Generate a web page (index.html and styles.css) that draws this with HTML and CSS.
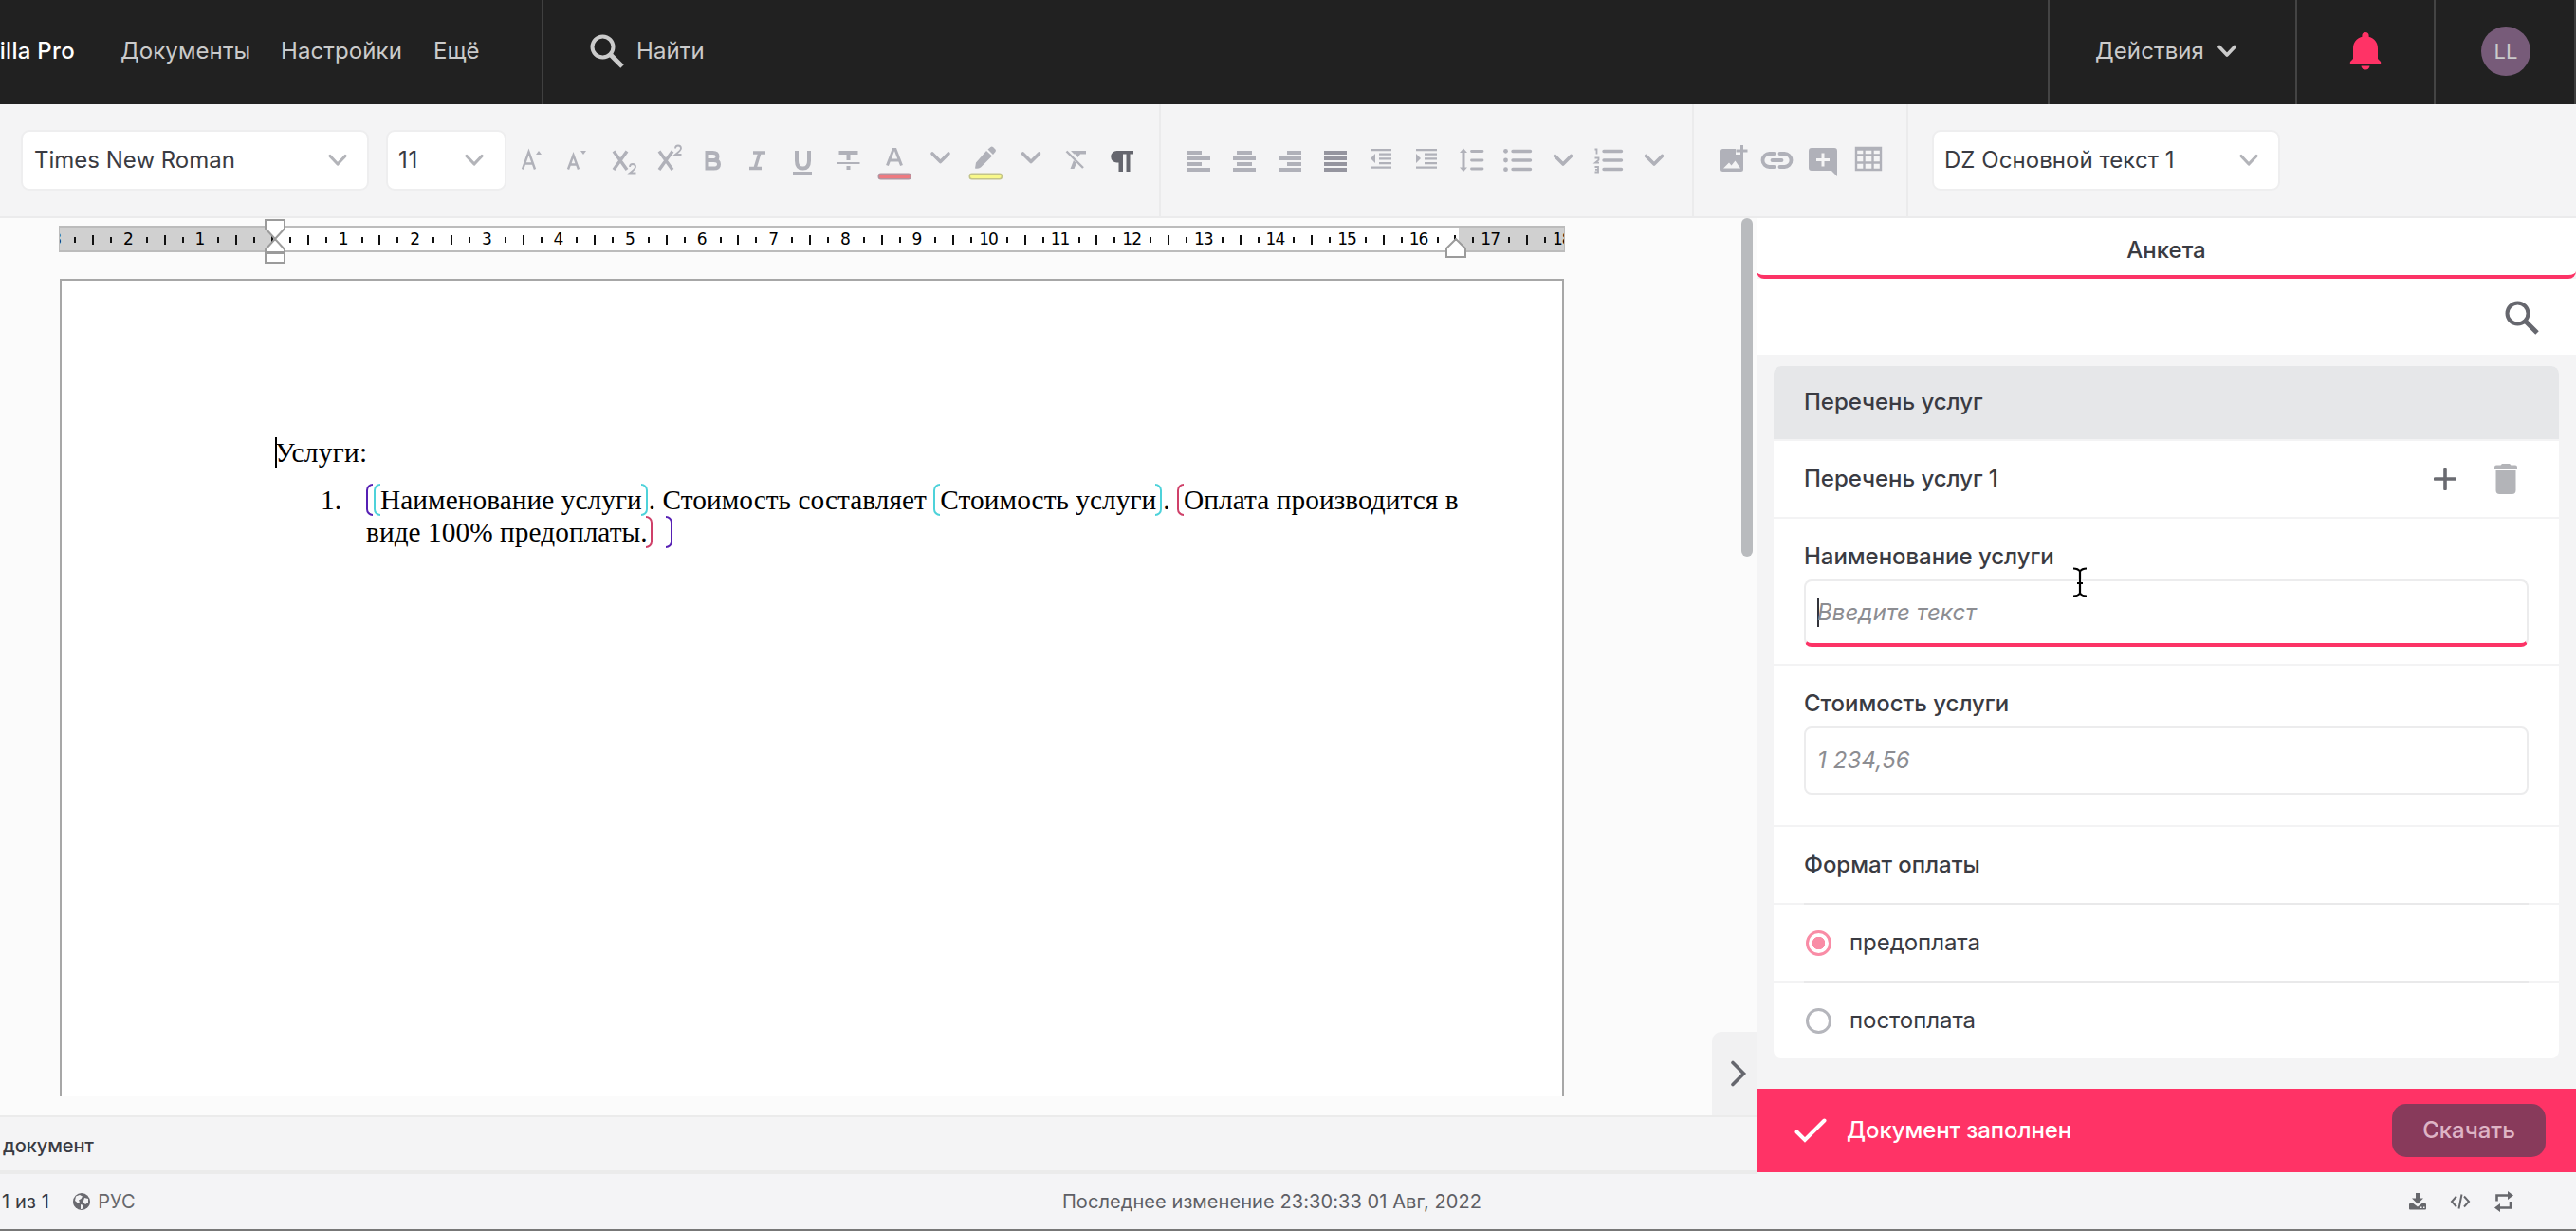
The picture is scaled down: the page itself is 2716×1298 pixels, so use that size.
FILE: index.html
```html
<!DOCTYPE html>
<html lang="ru">
<head>
<meta charset="utf-8">
<title>Doczilla Pro</title>
<link rel="stylesheet" href="styles.css">
</head>
<body>
<header class="topbar">
  <nav class="topbar-nav">
    <span class="brand">Doczilla Pro</span>
    <span class="nav-docs">Документы</span>
    <span class="nav-settings">Настройки</span>
    <span>Ещё</span>
  </nav>
  <div class="topbar-search">
    <svg width="36" height="36" viewBox="0 0 36 36" fill="none" stroke="currentColor"><circle cx="13.5" cy="13.5" r="11" stroke-width="4"/><path d="M21.5 21.5 34 34" stroke-width="5"/></svg>
    <span>Найти</span>
  </div>
  <div class="topbar-cell actions">
    <span>Действия</span>
    <svg width="22" height="14" viewBox="0 0 22 14" fill="none" stroke="currentColor" stroke-width="3.6" stroke-linecap="round" stroke-linejoin="round"><path d="M3 2.5 11 11 19 2.5"/></svg>
  </div>
  <div class="topbar-cell bell">
    <svg width="34" height="40" viewBox="0 0 34 40" fill="#ff3366"><path d="M17 0a3.6 3.6 0 0 1 3.6 3.6v1.2C26.500 6.500 30 11 30 17v11l3 3q1 3-2 3H3q-3 0-2-3l3-3V17C4 11 7.500 6.500 13.400 4.800V3.600A3.600 3.600 0 0 1 17 0z"/><path d="M12.500 35.500h9a4.500 4 0 0 1-9 0z"/></svg>
  </div>
  <div class="topbar-cell user"><span class="avatar">LL</span></div>
</header>

<div class="toolbar">
  <div class="tools tools-font">
    <div class="select font-family"><span>Times New Roman</span><svg class="chev" viewBox="0 0 22 14"><path d="M3 2.500 11 11 19 2.500"/></svg></div>
    <div class="select font-size"><span>11</span><svg class="chev" viewBox="0 0 22 14"><path d="M3 2.500 11 11 19 2.500"/></svg></div>
    <svg class="tool" viewBox="0 0 48 48"><path class="thin" d="M15 33.500 21.500 15 28 33.500M17.500 27.500h8"/><path d="M29 18h6l-3-4z"/></svg>
    <svg class="tool" viewBox="0 0 48 48"><path class="thin" d="M15 33.500 20.500 18.500 26 33.500M17 28.500h7"/><path d="M28 14h6l-3 4z"/></svg>
    <svg class="tool" viewBox="0 0 48 48"><path class="bold" d="M15 14.500 29 34M29 14.500 15 34"/><path class="fine" d="M32 31q0-3 3-3t3 3q0 2-6 6.500h6.500"/></svg>
    <svg class="tool" viewBox="0 0 48 48"><path class="bold" d="M15 14.500 29 34M29 14.500 15 34"/><path class="fine" d="M32 11.500q0-3 3-3t3 3q0 2-6 6.500h6.500"/></svg>
    <svg class="tool" viewBox="0 0 48 48"><path class="heavy" d="M17.500 16h6q5 0 5 4t-5 4h-6zM17.500 24h7q5.500 0 5.500 4.300t-5.500 4.300h-7z"/></svg>
    <svg class="tool" viewBox="0 0 48 48"><path class="bold" d="M18 16h13M14 32.500h13M25 16 20 32.500"/></svg>
    <svg class="tool" viewBox="0 0 48 48"><path class="heavy" d="M16 14v10.500q0 8 6.500 8t6.500-8V14"/><path d="M12 36h20v3.500H12z"/></svg>
    <svg class="tool" viewBox="0 0 48 48"><path d="M12.500 14h20v4h-8v6h-4v-6h-8zM10 26h24.500v2H10zM20.500 30h4v4h-4z"/></svg>
    <svg class="tool" viewBox="0 0 48 48"><path class="mid" d="M15.500 29.500 22 12.500h2l6.500 17M18 24h10"/><rect x="6.300" y="38.300" width="34" height="5.400" rx="2.500" fill="#ee7a80" stroke="#b3939f" stroke-width="1.500"/></svg>
    <svg class="tool" viewBox="0 0 48 48"><path class="arrow" d="M15 17 23.500 25.500 32 17"/></svg>
    <svg class="tool" viewBox="0 0 48 48"><path d="M12 32.500l1-6 11-12.500 6 5.500-12 12q-3 2-6 1zM25.500 12.500l3-2.500q1-1 2.500 0l2.500 2.500q1 1 0 2.500l-2.500 3z"/><rect x="6.300" y="38.300" width="34" height="5.400" rx="2.500" fill="#f8f88a" stroke="#c3c489" stroke-width="1.500"/></svg>
    <svg class="tool" viewBox="0 0 48 48"><path class="arrow" d="M14.500 17 23 25.500 31.500 17"/></svg>
    <svg class="tool" viewBox="0 0 48 48"><path d="M17 14h16v3.600h-6L24.500 21 22 18.500V17.600h-1.500zM20 24l3 3-2.500 6H16.500z"/><path class="thin" d="M12.500 14.500 30 32"/></svg>
    <svg class="tool para" viewBox="0 0 48 48"><path d="M18 14h17v3.500h-3.500V36h-4V17.500H24V36h-4.500V26.500H17.500a6.250 6.250 0 0 1 0-12.500z"/></svg>
  </div>
  <div class="tools tools-para">
    <svg class="tool" viewBox="0 0 48 48"><path d="M12 14h15v4H12zM12 20h24v4H12zM12 26h15v4H12zM12 32h24v4H12z"/></svg>
    <svg class="tool" viewBox="0 0 48 48"><path d="M16 14h16v4H16zM12 20h24v4H12zM16 26h16v4H16zM12 32h24v4H12z"/></svg>
    <svg class="tool" viewBox="0 0 48 48"><path d="M21 14h15v4H21zM12 20h24v4H12zM21 26h15v4H21zM12 32h24v4H12z"/></svg>
    <svg class="tool dark" viewBox="0 0 48 48"><path d="M12 14h24v4H12zM12 20h24v4H12zM12 26h24v4H12zM12 32h24v4H12z"/></svg>
    <svg class="tool" viewBox="0 0 48 48"><path d="M13 12h22v2.200H13zM22 16.500h13v2.200H22zM22 21.200h13v2.200H22zM22 26h13v2.200H22zM13 30.500h22v2.200H13zM18 17v10l-5-5z"/></svg>
    <svg class="tool" viewBox="0 0 48 48"><path d="M13 12h22v2.200H13zM22 16.500h13v2.200H22zM22 21.200h13v2.200H22zM22 26h13v2.200H22zM13 30.500h22v2.200H13zM13 17v10l5-5z"/></svg>
    <svg class="tool" viewBox="0 0 48 48"><path class="mid" d="M15 15v18"/><path class="spaced" d="M23.500 14.500h11.500M23.500 24h11.500M23.500 33h11.500"/><path d="M11 16l4-4.500 4 4.500zM11 31.500l4 4.500 4-4.500z"/></svg>
    <svg class="tool" viewBox="0 0 48 48"><path class="list" d="M19 14.500h18.500M19 24h18.500M19 33.500h18.500"/><circle cx="11.500" cy="14.300" r="2.400"/><circle cx="11.500" cy="24" r="2.400"/><circle cx="11.500" cy="33.700" r="2.400"/></svg>
    <svg class="tool" viewBox="0 0 48 48"><path class="arrow" d="M15.500 19.500 24 28 32.500 19.500"/></svg>
    <svg class="tool" viewBox="0 0 48 48"><path class="list" d="M19 14.500h18.500M19 24h18.500M19 33.500h18.500"/><path class="fine" d="M9.500 12.500h2v5M9.500 21.500h4v2.200l-3.500 3h4M9.500 31h3.500v5.500H9.500M10 33.800h3"/></svg>
    <svg class="tool" viewBox="0 0 48 48"><path class="arrow" d="M15.500 19.500 24 28 32.500 19.500"/></svg>
  </div>
  <div class="tools tools-insert">
    <svg class="tool" viewBox="0 0 48 48"><path fill-rule="evenodd" d="M14.500 12H28v6h8v15.500q0 2.500-2.500 2.500h-19q-2.500 0-2.500-2.500v-19q0-2.500 2.500-2.500zM15 32.500h18l-5.500-8-4 5-2.500-3z"/><path class="mid" d="M34.500 8v12M28.500 14h12"/></svg>
    <svg class="tool" viewBox="0 0 48 48"><path class="link" d="M20.500 17H15.500a7 7 0 0 0 0 14h5M26.500 17h5a7 7 0 0 1 0 14h-5M18.500 24h10"/></svg>
    <svg class="tool" viewBox="0 0 48 48"><path d="M12 11h24q3 0 3 3v27l-6-6H12q-3 0-3-3V14q0-3 3-3z"/><path d="M24 16.500v14M17 23.500h14" stroke="#f5f5f6" stroke-width="3"/></svg>
    <svg class="tool" viewBox="0 0 48 48"><path class="grid" d="M11 11h26v23H11zM11 18.500h26M11 26.500h26M19.500 11v23M28.500 11v23M11 12.500h26"/></svg>
  </div>
  <div class="tools tools-style">
    <div class="select para-style"><span>DZ Основной текст 1</span><svg class="chev" viewBox="0 0 22 14"><path d="M3 2.500 11 11 19 2.500"/></svg></div>
  </div>
</div>

<div class="workspace">
  <main class="editor">
    <div class="canvas">
      <div class="ruler">
        <div class="ruler-track" id="ruler"></div>
        <svg class="marker marker-left" width="22" height="48" viewBox="0 0 22 48"><path d="M1 1h20v9l-10 11L1 10zM1 32l10-11 10 11v3H1zM1 36h20v10H1z"/></svg>
        <svg class="marker marker-right" width="22" height="22" viewBox="0 0 22 22"><path d="M11 1 1 11v9h20v-9z"/></svg>
      </div>
      <div class="page">
        <p class="heading"><i class="caret"></i>Услуги:</p>
        <div class="item"><span class="num">1.</span><p><b class="br open purple first"></b><b class="br open cyan"></b>Наименование услуги<b class="br close cyan"></b>. Стоимость составляет <b class="br open cyan"></b>Стоимость услуги<b class="br close cyan"></b>. <b class="br open red"></b>Оплата производится в<br>виде 100% предоплаты.<b class="br close red"></b><b class="br close purple last"></b></p></div>
      </div>
      <div class="scrollbar"></div>
      <div class="collapse"><svg width="18" height="28" viewBox="0 0 18 28"><path d="M3 2.500 14.500 14 3 25.500" fill="none" stroke="#66676e" stroke-width="3.600" stroke-linecap="round"/></svg></div>
    </div>
    <div class="crumbs"><span>документ</span></div>
  </main>
  <aside class="panel">
    <div class="tab">Анкета</div>
    <div class="panel-search"><svg width="36" height="36" viewBox="0 0 36 36" fill="none" stroke="#66676e"><circle cx="13.500" cy="13.500" r="11" stroke-width="4"/><path d="M21.500 21.500 34 34" stroke-width="5"/></svg></div>
    <div class="form">
      <div class="card">
        <div class="row group">Перечень услуг</div>
        <div class="row entry"><span>Перечень услуг 1</span>
          <svg width="24" height="24" viewBox="0 0 24 24"><path d="M12 1.500v21M1.500 12h21" stroke="#6a6b71" stroke-width="3.600" stroke-linecap="round"/></svg>
          <svg width="24" height="32" viewBox="0 0 24 32" fill="#b3b4b8"><path d="M8 0h8l1.500 1.500H22q2 0 2 2V5H0V3.500q0-2 2-2h4.500zM1.500 7h21v21q0 4-4 4h-13q-4 0-4-4z"/></svg>
        </div>
        <div class="row field name"><label>Наименование услуги</label><div class="input focus"><i class="caret"></i>Введите текст</div></div>
        <div class="row field price"><label>Стоимость услуги</label><div class="input">1 234,56</div></div>
        <div class="row title">Формат оплаты</div>
        <div class="row option"><i class="radio on"></i>предоплата</div>
        <div class="row option"><i class="radio"></i>постоплата</div>
      </div>
    </div>
    <div class="done">
      <svg width="34" height="26" viewBox="0 0 34 26"><path d="M2.500 14.500 11 23 31.500 2.500" fill="none" stroke="#fff" stroke-width="4" stroke-linecap="round"/></svg>
      <span>Документ заполнен</span>
      <button class="download">Скачать</button>
    </div>
  </aside>
  <svg class="ibeam" width="16" height="32" viewBox="0 0 16 32"><path d="M1 1.500q5 0 7 3 2-3 7-3M1 30.500q5 0 7-3 2 3 7 3M8 4v24M5 17h6" fill="none" stroke="#fff" stroke-width="4"/><path d="M1 1.500q5 0 7 3 2-3 7-3M1 30.500q5 0 7-3 2 3 7 3M8 4v24M5 17h6" fill="none" stroke="#000" stroke-width="2.200"/></svg>
</div>

<footer class="status">
  <div class="status-left">
    <span class="pages">1 из 1</span>
    <svg width="18" height="18" viewBox="0 0 18 18"><circle cx="9" cy="9" r="9" fill="#6a6a70"/><path d="M3 3.500 7 2l3 1.500L8.500 6 6 7.500 7 9.500l-2 1L2 8zM12 5l4 1v4l-3 2-2.500-2.500zM8 12l3 1-1.500 4H8z" fill="#f3f3f5"/></svg>
    <span>РУС</span>
  </div>
  <div class="modified">Последнее изменение 23:30:33 01 Авг, 2022</div>
  <div class="status-icons">
    <svg width="20" height="18" viewBox="0 0 20 18" fill="#66676c"><path fill-rule="evenodd" d="M8 0h4v5.500h4l-6 6-6-6h4zM2 11h3.500l4.500 3.500 4.500-3.500H18q1 0 1 1v4.500q0 1-1 1H2q-1 0-1-1V12q0-1 1-1zM13 14.500v1.500h1.500v-1.500zM16 14.500v1.500h1.500v-1.500z"/></svg>
    <svg width="22" height="16" viewBox="0 0 22 16" fill="none" stroke="#66676c" stroke-width="2"><path d="M7 2.500 2 8l5 5.500M15 2.500l5 5.500-5 5.500M12.500 0.500l-3 15"/></svg>
    <svg width="22" height="22" viewBox="0 0 22 22"><path d="M3.500 10.500V4.500H16M18 11v6.500H6" fill="none" stroke="#66676c" stroke-width="2.600"/><path d="M15 0l6 4.500-6 4.500zM7 13l-6 4.500 6 4.500z" fill="#66676c"/></svg>
  </div>
</footer>
<script src="ruler.js"></script>
</body>
</html>
```
FILE: styles.css
```css
* { box-sizing: border-box; }
body {
  margin: 0;
  height: 1298px;
  display: flex;
  flex-direction: column;
  overflow: hidden;
  font: 24px/32px Inter, "Liberation Sans", sans-serif;
  color: #3a3b42;
  background: #fbfbfb;
}
p { margin: 0; }
svg { flex: none; }

/* Top bar */
.topbar { height: 110px; flex: none; display: flex; background: #212121; color: #cbcbcb; border-right: 2px solid #3e3e3e; letter-spacing: .1px; }
.topbar-nav { width: 573px; border-right: 2px solid #404040; display: flex; align-items: center; padding-bottom: 2px; }
.topbar-nav span { white-space: nowrap; }
.topbar-nav .brand { width: 79px; margin-right: 48px; display: flex; justify-content: flex-end; color: #fff; font-weight: 480; letter-spacing: .3px; }
.topbar-nav .nav-docs { width: 169px; }
.topbar-nav .nav-settings { width: 161px; }
.topbar-search { flex: 1; display: flex; align-items: center; padding: 0 0 2px 49px; gap: 13px; }
.topbar-cell { border-left: 2px solid #444; display: flex; align-items: center; justify-content: center; padding-bottom: 2px; }
.actions { width: 261px; gap: 13px; padding-right: 13px; }
.bell { width: 146px; }
.user { width: 148px; padding-left: 2px; }
.avatar { width: 52px; height: 52px; border-radius: 50%; background: #775b79; display: flex; align-items: center; justify-content: center; font-size: 22px; }

/* Formatting toolbar */
.toolbar { height: 120px; flex: none; display: flex; background: #f4f4f5; border-bottom: 2px solid #ebebec; }
.tools { display: flex; align-items: center; padding-bottom: 1px; border-left: 2px solid #ebebec; }
.tools-font { width: 1222px; padding-left: 22px; border: 0; }
.tools-para { width: 562px; padding-left: 16px; }
.tools-insert { width: 226px; padding-left: 16px; }
.tools-style { padding-left: 25px; }
.select { height: 64px; background: #fff; border: 2px solid #eeeeef; border-radius: 9px; display: flex; align-items: center; justify-content: space-between; padding: 0 20px 0 12px; white-space: nowrap; }
.font-family { width: 367px; margin-right: 18px; }
.font-size { width: 127px; margin-right: 2px; padding: 0 21px 0 11px; letter-spacing: .8px; }
.para-style { width: 367px; padding-left: 11px; letter-spacing: .05px; }
.chev { width: 22px; height: 14px; fill: none; stroke: #b3b4b9; stroke-width: 3.2; stroke-linecap: round; stroke-linejoin: round; }
.tool { width: 48px; height: 48px; fill: #b0b1b9; }
.tool .thin, .tool .bold, .tool .heavy, .tool .fine, .tool .mid, .tool .arrow, .tool .list, .tool .link, .tool .grid, .tool .spaced { fill: none; stroke: #b0b1b9; }
.tool .thin { stroke-width: 2.4; }
.tool .fine { stroke-width: 1.8; }
.tool .bold { stroke-width: 3.4; }
.tool .heavy { stroke-width: 4; }
.tool .mid { stroke-width: 3; }
.tool .arrow { stroke-width: 3.6; stroke-linecap: round; stroke-linejoin: round; }
.tool .list { stroke-width: 3.4; stroke-linecap: round; }
.tool .spaced { stroke-width: 2.8; stroke-linecap: round; }
.tool .link { stroke-width: 3.8; stroke-linecap: round; }
.tool .grid { stroke-width: 2.4; }
.tool.para { fill: #65666e; }
.tool.dark { fill: #95959f; }

/* Workspace */
.workspace { flex: 1; display: flex; min-height: 0; position: relative; }
.editor { width: 1852px; display: flex; flex-direction: column; }
.canvas { flex: 1; position: relative; padding: 8px 0 0 62px; display: flex; flex-direction: column; }
.ruler { position: relative; width: 1588px; height: 28px; margin-bottom: 28px; flex: none; }
.ruler-track { position: relative; height: 28px; overflow: hidden; border: solid #bcbcbc; border-width: 2px 1px; background: linear-gradient(90deg, #d0d0d0 227px, #fff 227px, #fff 1475px, #d0d0d0 1475px); }
.ruler-track span { position: absolute; top: 3px; width: 40px; margin-left: -21px; text-align: center; font: 17px/18px "DejaVu Sans", sans-serif; letter-spacing: -1px; color: #000; }
.ruler-track i { position: absolute; top: 10px; width: 2px; height: 6px; margin-left: -1px; background: #111; }
.ruler-track i.half { top: 8px; height: 10px; }
.marker { position: absolute; fill: #fff; stroke: #9b9b9b; stroke-width: 2; }
.marker-left { left: 217px; top: -7px; }
.marker-right { left: 1462px; top: 13px; }
.page { width: 1586px; height: 862px; margin-left: 1px; border: 2px solid #a7a7a7; border-bottom: 0; background: #fff; padding: 164px 0 0 225px; font: 29.33px/34px "Liberation Serif", "Times New Roman", serif; letter-spacing: .05px; color: #000; white-space: nowrap; }
.heading { height: 50px; letter-spacing: .3px; }
.heading .caret { display: inline-block; width: 2px; height: 32px; background: #000; margin-right: -2px; vertical-align: -6px; }
.item { display: flex; padding-left: 48px; }
.num { width: 48px; }
.br { display: inline-block; height: 34px; width: 7px; vertical-align: top; border: 0 solid; }
.br.open { border-width: 2px 0 2px 2px; border-radius: 7px 0 0 7px; }
.br.close { border-width: 2px 2px 2px 0; border-radius: 0 7px 7px 0; }
.br.first { margin-right: 1px; }
.purple { color: #5620b4; }
.cyan { color: #4dd2da; }
.red { color: #cf4069; }
.close.cyan { margin: 0 1px 0 -1px; }
.close.red { margin-left: -2px; }
.last { margin-left: 14px; }
.scrollbar { position: absolute; left: 1836px; top: 0; width: 12px; height: 357px; border-radius: 6px; background: #b9bbbe; }
.collapse { position: absolute; left: 1805px; bottom: 0; width: 47px; height: 88px; border-radius: 10px 0 0 0; background: #f1f1f2; display: flex; align-items: center; justify-content: center; padding-left: 8px; }
.crumbs { height: 62px; flex: none; background: #f4f4f5; border: solid #ebebeb; border-width: 2px 0 4px; padding: 14px 0 0 3px; font-size: 20px; font-weight: 450; letter-spacing: -.1px; }

/* Questionnaire panel */
.panel { width: 864px; display: flex; flex-direction: column; background: #f4f4f5; padding-bottom: 2px; }
.tab { height: 64px; flex: none; background: #fff; text-align: center; font-weight: 460; padding-top: 18px; border-bottom: 4px solid #fc3366; border-radius: 0 0 8px 8px; }
.panel-search { height: 80px; flex: none; background: #fff; display: flex; justify-content: flex-end; padding: 23px 39px 0 0; }
.form { flex: 1; padding: 12px 18px 0; }
.card { background: #fff; border-radius: 8px; height: 730px; overflow: hidden; }
.row { border-bottom: 2px solid #f3f3f4; padding: 0 32px; display: flex; align-items: center; font-weight: 460; letter-spacing: -.04px; }
.group { height: 79px; background: #e6e7e9; padding-bottom: 2px; }
.entry { height: 82px; padding-right: 44px; }
.entry span { flex: 1; }
.entry svg + svg { margin-left: 40px; }
.field { flex-direction: column; align-items: stretch; }
.name { height: 155px; padding-top: 24px; }
.price { height: 170px; padding-top: 24px; }
.field label { height: 40px; }
.input { height: 72px; flex: none; border: 2px solid #ececed; border-radius: 8px; padding: 0 12px; display: flex; align-items: center; font-weight: 400; font-style: italic; color: #8c8d92; letter-spacing: .15px; }
.input.focus { border-bottom: 4px solid #fc3366; height: 71px; }
.input .caret { width: 2px; height: 30px; background: #33343b; margin-right: -2px; }
.title, .option { height: 82px; border: 0; padding-bottom: 2px; background: linear-gradient(#e9e9ea, #e9e9ea) 50% 100% / calc(100% - 64px) 2px no-repeat, linear-gradient(#f3f3f4, #f3f3f4) 0 100% / 100% 2px no-repeat; }
.option { font-weight: 400; }
.option:last-child { background: none; }
.radio { width: 27px; height: 27px; margin: 0 19px 0 2px; border-radius: 50%; border: 3px solid #b5b6bc; }
.radio.on { border-color: #f98ca6; background: radial-gradient(circle, #f98ca6 6.5px, #fff 7px); }
.done { height: 88px; flex: none; background: #ff3366; color: #fff; display: flex; align-items: center; padding: 0 32px 0 40px; font-weight: 470; letter-spacing: -.08px; }
.done span { flex: 1; margin-left: 21px; }
.download { width: 162px; height: 56px; border: 0; border-radius: 15px; background: #883a5b; color: #deb4c5; font: 470 24px/32px Inter, sans-serif; padding: 0; }
.ibeam { position: absolute; left: 2185px; top: 368px; }

/* Status bar */
.status { height: 60px; flex: none; display: grid; grid-template-columns: 1fr auto 1fr; align-items: center; background: #f4f4f6; border-bottom: 2px solid #777; font-size: 20px; color: #66676c; }
.status-left { display: flex; align-items: center; padding-left: 2px; gap: 8px; letter-spacing: .15px; }
.pages { color: #3a3b42; margin-right: 17px; }
.modified { color: #5e5f65; padding-right: 34px; letter-spacing: .08px; }
.status-icons { display: flex; align-items: center; justify-content: flex-end; padding-right: 65px; gap: 24px; }
```
FILE: ruler.js
```js
// Ruler scale: one centimetre is 75.6px, with a tick at every quarter.
const track = document.getElementById("ruler");
const zero = 224, cm = 75.6;
for (let q = -12; q <= 72; q++) {
  const whole = q % 4 === 0 && q !== 0;
  const mark = document.createElement(whole ? "span" : "i");
  if (whole) mark.textContent = Math.abs(q / 4);
  else if (q % 2 === 0) mark.className = "half";
  mark.style.left = zero + q * cm / 4 + "px";
  track.append(mark);
}
```
